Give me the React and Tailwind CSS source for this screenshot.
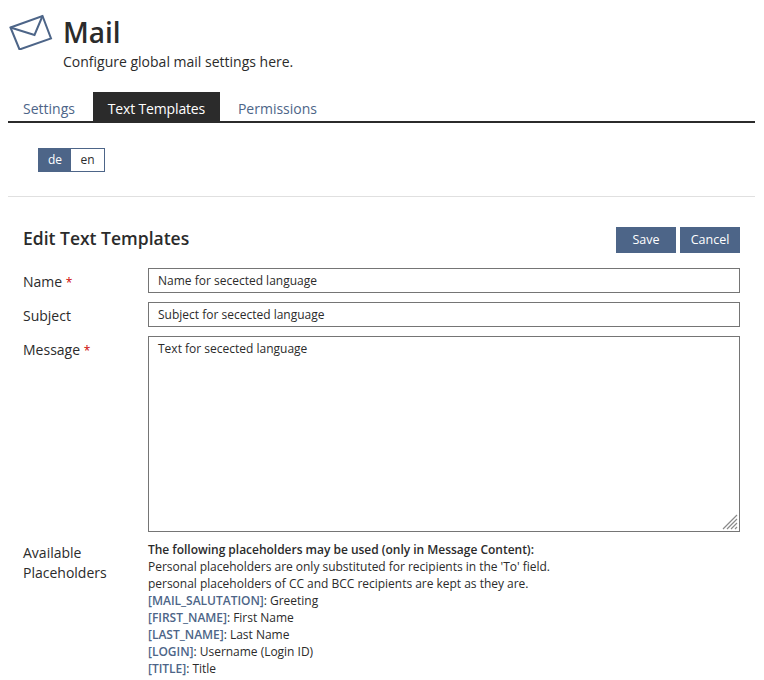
export default function App() {
  const placeholders = [
    ['[MAIL_SALUTATION]', 'Greeting'],
    ['[FIRST_NAME]', 'First Name'],
    ['[LAST_NAME]', 'Last Name'],
    ['[LOGIN]', 'Username (Login ID)'],
    ['[TITLE]', 'Title'],
  ];

  return (
    <div className="h-[680px] overflow-hidden bg-white pr-[9px] pl-2 font-['Open_Sans',sans-serif] text-[13px] text-[#2b2b2b]">
      {/* Header */}
      <div className="flex h-[92px] items-start">
        <svg width="44" height="36" viewBox="0 0 44 36" fill="none" stroke="#4d6588" strokeWidth="2" className="mt-[14px] ml-[1px] shrink-0">
          <path d="M1.5 13.5 L 33.5 2 L 42 24.5 L 10.5 35.5 Z" />
          <path d="M1.5 13.5 L 25.5 21 L 33.5 2" />
        </svg>
        <div className="ml-[10px]">
          <h1 className="mt-[13px] text-[28px] leading-[38px] font-semibold">Mail</h1>
          <p className="mt-[1px] text-[14px] leading-[20px]">Configure global mail settings here.</p>
        </div>
      </div>

      {/* Tabs */}
      <div className="flex h-[31px] gap-[3px] border-b-2 border-[#2b2b2b] text-[14px]">
        <div className="px-[15px] pt-[7px] leading-[20px] text-[#4d6588]">Settings</div>
        <div className="w-[127px] bg-[#2b2b2b] pt-[7px] text-center leading-[20px] tracking-[-0.15px] text-white">Text Templates</div>
        <div className="px-[15px] pt-[7px] leading-[20px] text-[#4d6588]">Permissions</div>
      </div>

      {/* Language switch */}
      <div className="h-[74px] border-b border-[#e0e0e0] pt-[25px] pl-[30px]">
        <div className="flex h-[24px] w-[67px] border border-[#4d6588] text-[12px] leading-[22px]">
          <div className="w-[32px] bg-[#4d6588] text-center text-white">de</div>
          <div className="flex-1 text-center">en</div>
        </div>
      </div>

      {/* Form */}
      <div className="px-[15px]">
        <div className="mt-[30px] flex h-[26px] items-center justify-between">
          <h2 className="-mt-[4px] text-[17.5px] font-semibold">Edit Text Templates</h2>
          <div className="flex gap-[4px] text-[12.5px] text-white">
            <button className="h-[26px] w-[60px] bg-[#4d6588]">Save</button>
            <button className="h-[26px] w-[60px] bg-[#4d6588]">Cancel</button>
          </div>
        </div>

        <div className="mt-[15px] flex h-[25px]">
          <label className="w-[125px] text-[14px] leading-[28px]">Name <span className="text-[12px] text-[#c00]">*</span></label>
          <input readOnly value="Name for secected language" className="h-[25px] flex-1 border border-[#757575] px-[9px] text-[12px] outline-none" />
        </div>
        <div className="mt-[9px] flex h-[25px]">
          <label className="w-[125px] text-[14px] leading-[28px]">Subject</label>
          <input readOnly value="Subject for secected language" className="h-[25px] flex-1 border border-[#757575] px-[9px] text-[12px] outline-none" />
        </div>
        <div className="mt-[9px] flex h-[196px]">
          <label className="w-[125px] text-[14px] leading-[28px]">Message <span className="text-[12px] text-[#c00]">*</span></label>
          <div className="relative flex-1">
            <textarea readOnly value="Text for secected language" className="block h-[196px] w-full resize-none border border-[#757575] px-[9px] py-[3px] text-[12px] leading-[18px] outline-none" />
            <svg width="16" height="16" viewBox="0 0 16 16" stroke="#8a8a8a" strokeWidth="1.2" className="absolute right-[2px] bottom-[2px]">
              <path d="M1 15 L15 1 M5 15 L15 5 M9 15 L15 9 M13 15 L15 13" />
            </svg>
          </div>
        </div>

        <div className="mt-[11px] flex">
          <div className="w-[125px] text-[14px] leading-[20px]">Available<br />Placeholders</div>
          <div className="-mt-[2px] text-[12px] leading-[17px] tracking-[-0.02px]">
            <p className="font-semibold">The following placeholders may be used (only in Message Content):</p>
            <p>Personal placeholders are only substituted for recipients in the 'To' field.</p>
            <p>personal placeholders of CC and BCC recipients are kept as they are.</p>
            {placeholders.map(([tag, label]) => (
              <p key={tag}><span className="font-semibold text-[#4d6588]">{tag}</span>: {label}</p>
            ))}
          </div>
        </div>
      </div>
    </div>
  );
}
